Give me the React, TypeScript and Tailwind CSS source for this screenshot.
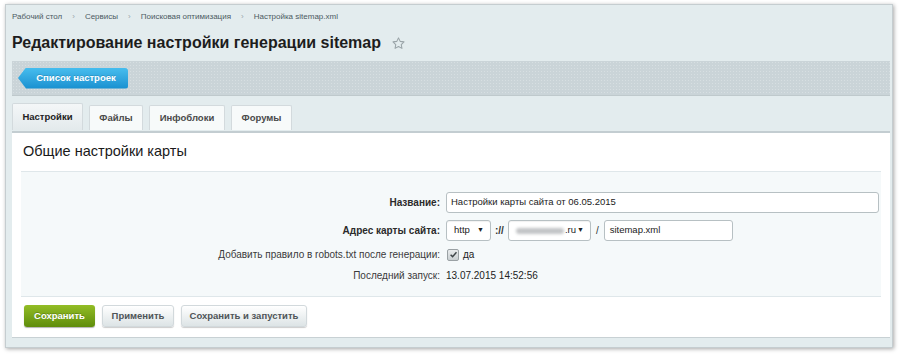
import React from 'react';

const crumbs = ['Рабочий стол', 'Сервисы', 'Поисковая оптимизация', 'Настройка sitemap.xml'];
const tabs = ['Настройки', 'Файлы', 'Инфоблоки', 'Форумы'];

function Star() {
    return (
        <svg width="15" height="15" viewBox="0 0 24 24" fill="none" stroke="#9aa4a8" strokeWidth="1.7" strokeLinejoin="round">
            <path d="M12 3l2.7 5.6 6.1.8-4.4 4.3 1.1 6.1L12 16.9l-5.5 2.9 1.1-6.1-4.4-4.3 6.1-.8z" />
        </svg>
    );
}

function Select({ children, width }: { children: React.ReactNode; width: string }) {
    return (
        <div className={`${width} h-[21px] flex items-center justify-between pl-[7px] pr-[6px] rounded-[3px] border border-[#b7c0c3] bg-white shadow-[inset_0_1px_1px_rgba(0,0,0,0.06)]`}>
            {children}
            <span className="text-[7px] text-[#222]">▼</span>
        </div>
    );
}

function Row({ label, bold, children }: { label: string; bold?: boolean; children: React.ReactNode }) {
    return (
        <div className="flex items-center">
            <div className={`w-[425px] pr-[6px] text-right whitespace-nowrap ${bold ? 'font-bold text-[#2b2b2b]' : 'text-[#3a3a3a]'}`}>{label}</div>
            <div className="flex items-center flex-1">{children}</div>
        </div>
    );
}

export default function App() {
    return (
        <div className="w-[900px] h-[354px] bg-white pt-[4px] pl-[5px] pr-[7px] pb-[6px]" style={{ fontFamily: '"Liberation Sans", Arial, sans-serif' }}>
            <div className="h-full flex flex-col bg-[#e3ecee] border border-[#c5cdd0] shadow-[1px_1px_4px_rgba(0,0,0,0.35)]">
                {/* Breadcrumbs */}
                <div className="flex items-center h-[22px] mt-[1px] pl-[6px] text-[8px] text-[#4b5a62]">
                    {crumbs.map((c, i) => (
                        <React.Fragment key={c}>
                            {i > 0 && <span className="mx-[10px] text-[#9aa6ab] text-[8px]">›</span>}
                            <span>{c}</span>
                        </React.Fragment>
                    ))}
                </div>

                {/* Title */}
                <div className="flex items-center h-[30px] pl-[6px]">
                    <h1 className="text-[16px] font-bold text-[#1d1d1d]">Редактирование настройки генерации sitemap</h1>
                    <span className="ml-[10px] mt-[1px]"><Star /></span>
                </div>

                {/* Toolbar */}
                <div className="mt-[3px] ml-[6px] mr-[2px] h-[35px] flex items-center pl-[6px] bg-[#cad4d8] bg-[radial-gradient(rgba(255,255,255,0.25)_0.6px,transparent_0.7px)] bg-[length:3px_3px] border-b border-[#bfc9cc]">
                    <div
                        className="h-[21px] w-[110px] flex items-center justify-center pl-[6px] text-[9.5px] font-bold text-white bg-gradient-to-b from-[#46bdee] to-[#1790d0] rounded-r-[3px] whitespace-nowrap"
                        style={{ clipPath: 'polygon(8px 0, 100% 0, 100% 100%, 8px 100%, 0 50%)', textShadow: '0 -1px 0 rgba(0,0,0,0.15)' }}
                    >
                        Список настроек
                    </div>
                </div>

                {/* Tabs */}
                <div className="mt-[7px] ml-[6px] flex items-end gap-[6px] h-[27px]">
                    {tabs.map((t, i) => (
                        <div
                            key={t}
                            className={
                                i === 0
                                    ? 'h-[27px] w-[71px] flex items-center justify-center text-[9.5px] font-bold text-[#222] bg-gradient-to-b from-[#f4f7f8] to-[#e3eaec] border border-b-0 border-[#d3dadd] rounded-t-[2px]'
                                    : `h-[25px] ${i === 1 ? 'w-[54px]' : i === 2 ? 'w-[76px]' : 'w-[61px]'} flex items-center justify-center text-[9.5px] font-bold text-[#4a4a4a] bg-[#f7fafa] border border-b-0 border-[#d3dadd] rounded-t-[2px]`
                            }
                        >
                            {t}
                        </div>
                    ))}
                </div>

                {/* Content */}
                <div className="ml-[6px] mr-[2px] mt-[1px] bg-white border-t-2 border-[#c3cdd1] flex flex-col h-[206px] shadow-[0_1px_0_#c8d1d4]">
                    <div className="h-[38px] flex items-center pl-[11px] text-[14.5px] text-[#1a1a1a]">Общие настройки карты</div>
                    <div className="mx-[9px] h-[126px] bg-[#f5f9fa] border-t border-b border-[#dfe7ea] pt-[20px] flex flex-col text-[10px]">
                        <div className="h-[24px]">
                            <Row label="Название:" bold>
                                <div className="w-[433px] h-[21px] flex items-center pl-[4px] border border-[#b7c0c3] rounded-[3px] bg-white text-[#222] text-[9.5px]">
                                    Настройки карты сайта от 06.05.2015
                                </div>
                            </Row>
                        </div>
                        <div className="h-[29px] pt-[4px]">
                            <Row label="Адрес карты сайта:" bold>
                                <Select width="w-[45px]"><span className="text-[#222] text-[9.5px]">http</span></Select>
                                <span className="mx-[4px] text-[#333] font-bold">://</span>
                                <Select width="w-[83px]">
                                    <span className="flex items-center text-[#222] text-[9.5px]">
                                        <span className="w-[48px] h-[6px] bg-[#c2c4c6] blur-[1.5px] rounded-full mr-[1px]" />
                                        .ru
                                    </span>
                                </Select>
                                <span className="mx-[5px] text-[#333]">/</span>
                                <div className="w-[129px] h-[21px] flex items-center pl-[5px] border border-[#b7c0c3] rounded-[3px] bg-white text-[#222] text-[9.5px]">sitemap.xml</div>
                            </Row>
                        </div>
                        <div className="h-[21px] pt-[2px]">
                            <Row label="Добавить правило в robots.txt после генерации:">
                                <div className="w-[12px] h-[12px] ml-[1px] rounded-[2px] border border-[#9aa1a4] bg-gradient-to-b from-[#e9eced] to-[#c9cfd1] flex items-center justify-center">
                                    <svg width="9" height="9" viewBox="0 0 10 10" fill="none" stroke="#3d4447" strokeWidth="1.6">
                                        <path d="M1.8 5.2l2.2 2.3 4.3-5" />
                                    </svg>
                                </div>
                                <span className="ml-[4px] text-[#222]">да</span>
                            </Row>
                        </div>
                        <div className="h-[20px] pt-[2px]">
                            <Row label="Последний запуск:">
                                <span className="text-[#222]">13.07.2015 14:52:56</span>
                            </Row>
                        </div>
                    </div>
                    <div className="flex items-center gap-[7px] pl-[12px] pt-[8px]">
                        <div className="h-[22px] w-[71px] flex items-center justify-center rounded-[3px] text-[9.5px] font-bold text-white bg-gradient-to-b from-[#93bd25] to-[#5f8d0b] shadow-[0_1px_1px_rgba(0,0,0,0.3)] whitespace-nowrap" style={{ textShadow: '0 -1px 0 rgba(0,0,0,0.2)' }}>
                            Сохранить
                        </div>
                        <div className="h-[22px] w-[72px] flex items-center justify-center rounded-[3px] text-[9.5px] font-bold text-[#4f5558] bg-gradient-to-b from-[#ffffff] to-[#dde4e6] border border-[#d2d9dc] shadow-[0_1px_1px_rgba(0,0,0,0.2)] whitespace-nowrap">
                            Применить
                        </div>
                        <div className="h-[22px] w-[126px] flex items-center justify-center rounded-[3px] text-[9.5px] font-bold text-[#4f5558] bg-gradient-to-b from-[#ffffff] to-[#dde4e6] border border-[#d2d9dc] shadow-[0_1px_1px_rgba(0,0,0,0.2)] whitespace-nowrap">
                            Сохранить и запустить
                        </div>
                    </div>
                </div>
            </div>
        </div>
    );
}
